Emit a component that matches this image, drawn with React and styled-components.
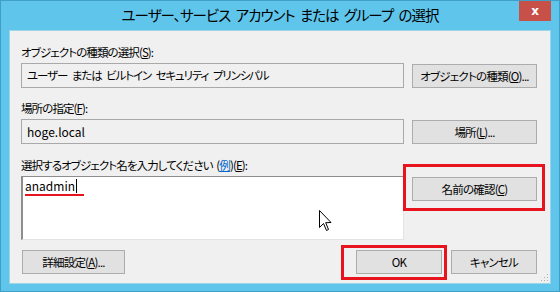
import styled, { createGlobalStyle } from 'styled-components';

const GlobalStyle = createGlobalStyle`
  html, body {
    margin: 0;
    padding: 0;
    background: #ffffff;
  }
  body {
    font-family: "Noto Sans CJK JP", "Noto Sans", sans-serif;
    font-feature-settings: "palt";
  }
`;

const Window = styled.div`
  width: 560px;
  height: 292px;
  box-sizing: border-box;
  display: flex;
  flex-flow: column nowrap;
  padding: 0 8px 7px 8px;
  background: #5fc5eb;
  border: 1px solid #3f9fc6;
`;

const TitleBar = styled.div`
  display: grid;
  grid-template-columns: 1fr auto 1fr;
  align-items: start;
  height: 29px;
  flex: none;
`;

const Title = styled.div`
  grid-column: 2;
  padding-top: 3px;
  font-size: 14.5px;
  letter-spacing: -1px;
  word-spacing: 3px;
  color: #000;
  white-space: nowrap;
`;

const CloseButton = styled.div`
  grid-column: 3;
  justify-self: end;
  width: 32px;
  height: 20px;
  background: #c75049;
  color: #fff;
  font-family: "DejaVu Sans", sans-serif;
  font-weight: 700;
  font-size: 12px;
  display: flex;
  align-items: center;
  justify-content: center;
`;

const Client = styled.div`
  flex: 1;
  position: relative;
  background: #f0f0f0;
  border: 1px solid #9fd3e8;
  padding: 12px 13px 0 11px;
  display: flex;
  flex-flow: column nowrap;
`;

const Label = styled.div`
  font-size: 11.5px;
  letter-spacing: -0.9px;
  word-spacing: 2px;
  color: #000;
  height: 18px;
  line-height: 18px;
  margin-bottom: 2px;
  white-space: nowrap;
`;

const Key = styled.span`
  text-decoration: underline;
`;

const Link = styled.span`
  color: #0066cc;
  text-decoration: underline;
`;

const Row = styled.div`
  display: flex;
  flex-flow: row nowrap;
  align-items: ${({ top }) => (top ? 'flex-start' : 'center')};
  gap: 8px;
  margin-bottom: ${({ gap }) => gap || 0}px;
`;

const TextBox = styled.div`
  width: 385px;
  height: 25px;
  box-sizing: border-box;
  border: 1px solid #a9a9a9;
  background: #f0f0f0;
  padding: 0 5px;
  font-size: ${({ latin }) => (latin ? '12px' : '11.5px')};
  letter-spacing: ${({ latin }) => (latin ? '0' : '-1.1px')};
  word-spacing: ${({ latin }) => (latin ? '0' : '3px')};
  line-height: 23px;
  color: #000;
  white-space: nowrap;
`;

const TextArea = styled.div`
  position: relative;
  width: 385px;
  height: 64px;
  box-sizing: border-box;
  border-top: 1px solid #8e8e8e;
  border-left: 2px solid #8e8e8e;
  border-right: 1px solid #e3e3e3;
  border-bottom: 1px solid #e3e3e3;
  background: #fff;
  padding: 1px 2px;
  font-size: 12px;
  line-height: 16px;
  color: #000;
`;

const Caret = styled.span`
  display: inline-block;
  width: 1px;
  height: 14px;
  background: #000;
  vertical-align: -2px;
  margin-left: 1px;
`;

const RedUnderline = styled.div`
  position: absolute;
  left: 2px;
  top: 17px;
  width: 59px;
  height: 2px;
  background: #e8141d;
`;

const Button = styled.div`
  width: ${({ w }) => w || 125}px;
  height: 24px;
  box-sizing: border-box;
  border: 1px solid #acacac;
  background: #e1e1e1;
  font-size: 11.5px;
  letter-spacing: -0.8px;
  line-height: 22px;
  text-align: center;
  color: #000;
  white-space: nowrap;
  flex: none;
`;

const Marked = styled.div`
  position: relative;
  flex: none;
  margin-top: ${({ mt }) => mt || 0}px;
`;

const RedBox = styled.div`
  position: absolute;
  top: ${({ t }) => -t}px;
  left: ${({ l }) => -l}px;
  right: ${({ r }) => -r}px;
  bottom: ${({ b }) => -b}px;
  border: 3px solid #e8141d;
  pointer-events: none;
`;

const Footer = styled.div`
  display: flex;
  flex-flow: row nowrap;
  align-items: center;
  gap: 9px;
  margin-top: 10px;
  padding-left: 1px;
`;

const Spacer = styled.div`
  flex: 1;
`;

const Cursor = styled.svg`
  position: absolute;
  left: 309px;
  top: 179px;
`;

const Grip = styled.svg`
  position: absolute;
  right: 1px;
  bottom: 1px;
`;

const App = () => {
  return (
    <>
      <GlobalStyle />
      <Window>
        <TitleBar>
          <Title>ユーザー、サービス アカウント または グループ の選択</Title>
          <CloseButton>x</CloseButton>
        </TitleBar>
        <Client>
          <Label>
            オブジェクトの種類の選択(<Key>S</Key>):
          </Label>
          <Row gap={11}>
            <TextBox>ユーザー または ビルトイン セキュリティ プリンシパル</TextBox>
            <Button>
              オブジェクトの種類(<Key>O</Key>)...
            </Button>
          </Row>
          <Label>
            場所の指定(<Key>F</Key>):
          </Label>
          <Row gap={12}>
            <TextBox latin>hoge.local</TextBox>
            <Button>
              場所(<Key>L</Key>)...
            </Button>
          </Row>
          <Label>
            選択するオブジェクト名を入力してください (<Link>例</Link>)(<Key>E</Key>):
          </Label>
          <Row top>
            <TextArea>
              anadmin
              <Caret />
              <RedUnderline />
            </TextArea>
            <Marked mt={1}>
              <Button>
                名前の確認(<Key>C</Key>)
              </Button>
              <RedBox t={13} l={9} r={8} b={10} />
            </Marked>
          </Row>
          <Footer>
            <Button w={103}>
              詳細設定(<Key>A</Key>)...
            </Button>
            <Spacer />
            <Marked>
              <Button w={86}>OK</Button>
              <RedBox t={5} l={15} r={5} b={6} />
            </Marked>
            <Button w={86}>キャンセル</Button>
          </Footer>
          <Cursor width="13" height="22" viewBox="0 0 13 22">
            <path
              d="M0.5 0.5 L0.5 17.5 L4.5 13.5 L7.5 20.5 L9.5 19.5 L6.7 12.7 L12 12.5 Z"
              fill="#fff"
              stroke="#000"
              strokeWidth="1"
              strokeLinejoin="miter"
            />
          </Cursor>
          <Grip width="10" height="10" viewBox="0 0 10 10">
            {[
              [8, 2],
              [8, 5],
              [8, 8],
              [5, 5],
              [5, 8],
              [2, 8],
            ].map(([x, y]) => (
              <rect key={`${x}-${y}`} x={x} y={y} width="1" height="1" fill="#b0b0b0" />
            ))}
          </Grip>
        </Client>
      </Window>
    </>
  );
};

export default App;
